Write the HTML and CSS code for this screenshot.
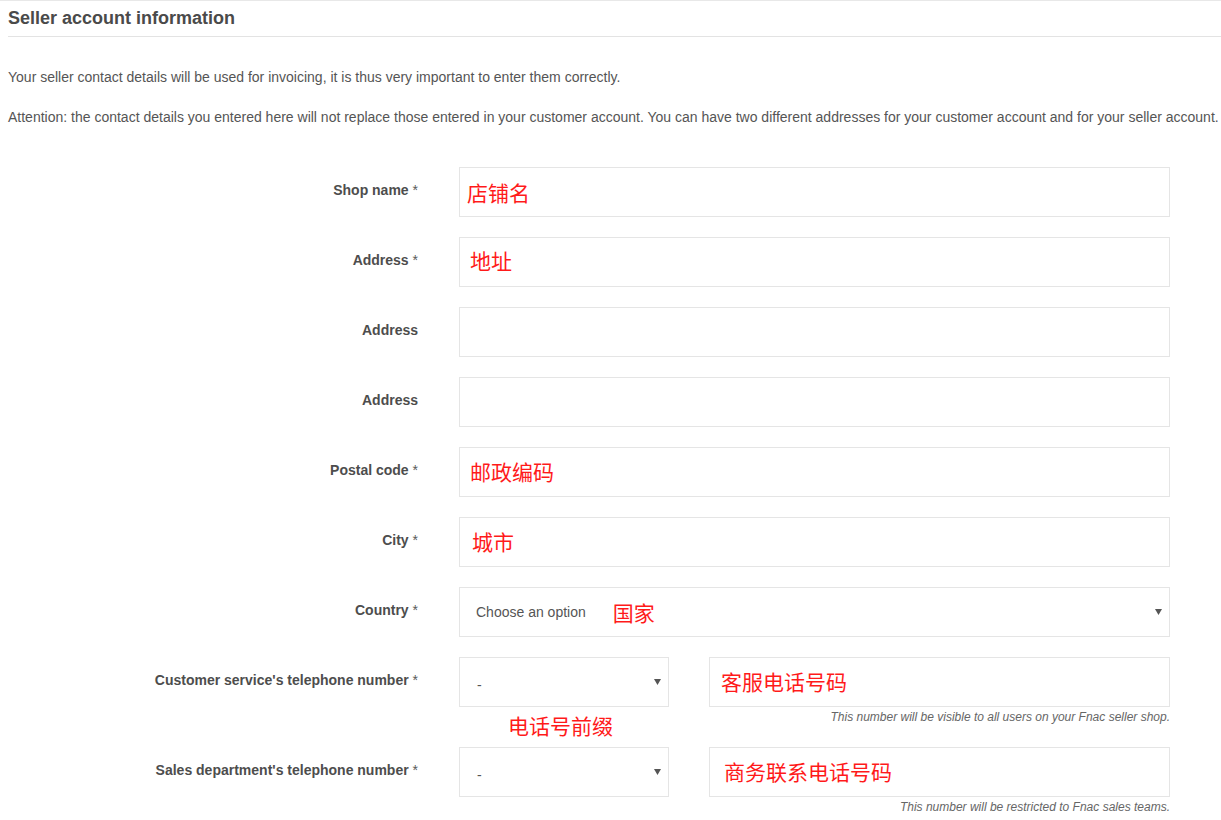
FILE: index.html
```html
<!DOCTYPE html>
<html lang="en">
<head>
<meta charset="utf-8">
<title>Seller account information</title>
<link rel="stylesheet" href="styles.css">
</head>
<body>
<div class="page">
  <h2 class="title">Seller account information</h2>
  <p class="intro first">Your seller contact details will be used for invoicing, it is thus very important to enter them correctly.</p>
  <p class="intro">Attention: the contact details you entered here will not replace those entered in your customer account. You can have two different addresses for your customer account and for your seller account.</p>

  <div class="form">
    <div class="label">Shop name <span class="req">*</span></div>
    <div class="field"><span class="note n-shop">店铺名</span></div>

    <div class="label">Address <span class="req">*</span></div>
    <div class="field"><span class="note n-addr1">地址</span></div>

    <div class="label">Address</div>
    <div class="field"></div>

    <div class="label">Address</div>
    <div class="field"></div>

    <div class="label">Postal code <span class="req">*</span></div>
    <div class="field"><span class="note n-addr">邮政编码</span></div>

    <div class="label">City <span class="req">*</span></div>
    <div class="field"><span class="note n-city">城市</span></div>

    <div class="label">Country <span class="req">*</span></div>
    <div class="field select">
      <span class="sel-text">Choose an option</span>
      <span class="note n-country">国家</span>
      <svg class="caret" width="7" height="6" viewBox="0 0 7 6"><path d="M0 0h7L3.5 6z" fill="#555"/></svg>
    </div>

    <div class="label">Customer service's telephone number <span class="req">*</span></div>
    <div class="phone">
      <div class="field select prefix">
        <span class="sel-text dash">-</span>
        <svg class="caret" width="7" height="6" viewBox="0 0 7 6"><path d="M0 0h7L3.5 6z" fill="#555"/></svg>
      </div>
      <div class="field"><span class="note n-tel">客服电话号码</span></div>
      <div class="prefix-note">电话号前缀</div>
      <div class="help">This number will be visible to all users on your Fnac seller shop.</div>
    </div>

    <div class="label">Sales department's telephone number <span class="req">*</span></div>
    <div class="phone">
      <div class="field select prefix">
        <span class="sel-text dash">-</span>
        <svg class="caret" width="7" height="6" viewBox="0 0 7 6"><path d="M0 0h7L3.5 6z" fill="#555"/></svg>
      </div>
      <div class="field"><span class="note n-sales">商务联系电话号码</span></div>
      <div class="help">This number will be restricted to Fnac sales teams.</div>
    </div>
  </div>
</div>
</body>
</html>
```

FILE: styles.css
```css
html, body {
  margin: 0;
  padding: 0;
  background: #ffffff;
}

body {
  font-family: "Liberation Sans", Arial, sans-serif;
  color: #555555;
  border-top: 1px solid #e8e8e8;
}

.page {
  padding-left: 8px;
}

.title {
  margin: 0;
  font-size: 18px;
  font-weight: bold;
  color: #4a4a4a;
  line-height: 35px;
  height: 35px;
  border-bottom: 1px solid #e3e3e3;
}

.intro {
  margin: 20px 0 0;
  font-size: 14px;
  line-height: 20px;
  color: #555555;
  white-space: nowrap;
}

.intro.first {
  margin-top: 30px;
}

.form {
  margin-top: 40px;
  display: grid;
  grid-template-columns: 411px 711px;
  column-gap: 40px;
  row-gap: 20px;
  align-items: start;
}

.label {
  text-align: right;
  font-size: 14px;
  font-weight: bold;
  color: #4d4d4d;
  line-height: 16px;
  padding-top: 15px;
  padding-right: 1px;
  white-space: nowrap;
}

.req {
  font-weight: normal;
  color: #5a5a5a;
}

.field {
  box-sizing: border-box;
  height: 50px;
  border: 1px solid #e5e5e5;
  background: #ffffff;
  display: flex;
  align-items: center;
  position: relative;
}

.note {
  font-family: "Noto Sans CJK SC", sans-serif;
  color: #ff1a1a;
  font-size: 21px;
  line-height: 24px;
}

.n-shop { margin-left: 7px; margin-top: 0px; }
.n-addr1 { margin-left: 10px; margin-top: -5px; }
.n-addr { margin-left: 10px; margin-top: -2px; }
.n-city { margin-left: 12px; margin-top: -3px; }
.n-country { margin-left: 27px; margin-top: -1px; }
.n-tel { margin-left: 11px; margin-top: -2px; }
.n-sales { margin-left: 14px; margin-top: -2px; }

.sel-text {
  font-size: 14px;
  color: #555555;
  margin-left: 16px;
}

.sel-text.dash {
  margin-left: 17px;
  margin-top: 6px;
}

.caret {
  position: absolute;
  right: 7px;
  top: 21px;
}

.phone {
  display: grid;
  grid-template-columns: 210px 461px;
  column-gap: 40px;
}

.prefix-note {
  grid-column: 1;
  grid-row: 2;
  font-family: "Noto Sans CJK SC", sans-serif;
  color: #ff1a1a;
  font-size: 21px;
  line-height: 20px;
  margin: 8px 0 -8px 49px;
  white-space: nowrap;
}

.help {
  grid-column: 2;
  grid-row: 2;
  text-align: right;
  font-size: 12px;
  font-style: italic;
  color: #666666;
  line-height: 14px;
  padding: 3px 0;
  white-space: nowrap;
}
```
